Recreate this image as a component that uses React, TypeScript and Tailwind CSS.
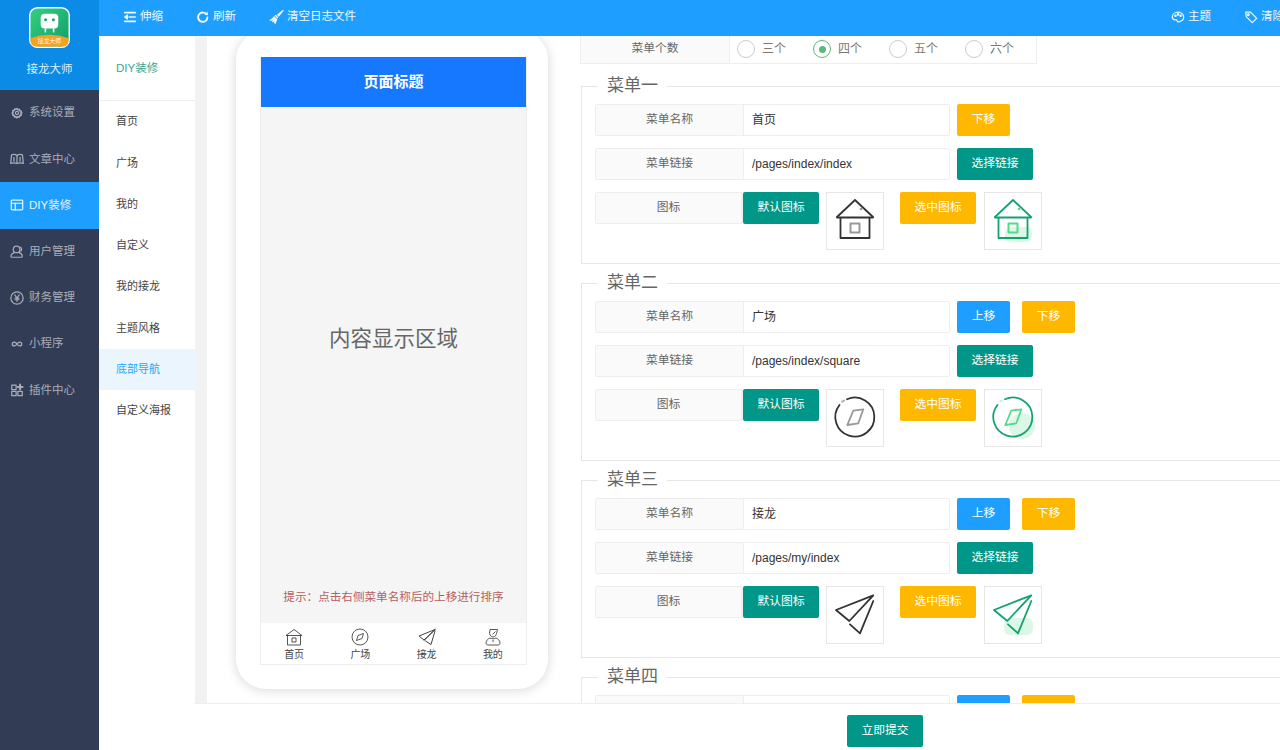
import React from "react";

const FONT = '"Liberation Sans","Noto Sans CJK SC",sans-serif';

function Logo() {
  return (
    <svg width="41" height="41" viewBox="0 0 42 42">
      <defs>
        <linearGradient id="lg" x1="0" y1="0" x2="1" y2="1">
          <stop offset="0" stopColor="#35d07f" />
          <stop offset="1" stopColor="#0f9d6b" />
        </linearGradient>
      </defs>
      <rect x="0.75" y="0.75" width="40.5" height="40.5" rx="8" fill="url(#lg)" stroke="#fff" strokeWidth="1.5" />
      <path d="M1.5 32 Q21 25 40.5 32 V34 Q40.5 40.5 34 40.5 H8 Q1.5 40.5 1.5 34 Z" fill="#f7a11f" />
      <rect x="12" y="7" width="18" height="15" rx="4" fill="#fff" />
      <rect x="16" y="22" width="1.6" height="4" fill="#fff" />
      <rect x="24.4" y="22" width="1.6" height="4" fill="#fff" />
      <circle cx="17" cy="13" r="1.6" fill="#1aa873" />
      <circle cx="25" cy="13" r="1.6" fill="#1aa873" />
      <text x="21" y="37" textAnchor="middle" fontSize="6" fill="#fff" fontFamily={FONT}>接龙大师</text>
    </svg>
  );
}

const I = ({ children, size = 14 }: { children: React.ReactNode; size?: number }) => (
  <svg width={size} height={size} viewBox="0 0 16 16" fill="none" stroke="currentColor" strokeWidth="1.4" strokeLinecap="round" strokeLinejoin="round" className="shrink-0">
    {children}
  </svg>
);

const navIcons: Record<string, React.ReactNode> = {
  gear: (
    <>
      <circle cx="8" cy="8" r="1.8" />
      <path d="M8 3l1.100 1.200 1.600-.3.5 1.600 1.600.5-.3 1.600L13.500 8l-1 .9.3 1.600-1.600.5-.5 1.600-1.600-.3L8 13.500l-1.100-1.200-1.600.3-.5-1.600-1.600-.5.3-1.600L2.500 8l1-.9-.3-1.600 1.600-.5.5-1.600 1.600.3z" strokeWidth="1.800" />
    </>
  ),
  book: (
    <>
      <path d="M8 4C6.500 2.900 3.500 2.700 1.800 3.300L.8 13c2.200-.8 5.200-.7 7.200.2 2-.9 5-1 7.200-.2l-1-9.700C12.500 2.700 9.500 2.900 8 4z" />
      <path d="M8 4v9M4.500 6v4.500M11.500 6v4.500" />
    </>
  ),
  layout: (
    <>
      <rect x="1.500" y="2.500" width="13" height="11" rx="1" />
      <path d="M1.500 6h13M6 6v7.500" />
    </>
  ),
  user: (
    <>
      <circle cx="7.500" cy="5" r="3.800" />
      <path d="M5 8.500c-1.800.8-4 2.500-4 4.500 0 .7.500 1 1 1h11c.6 0 1-.4 1-1 0-2-2-3.700-4-4.500" />
      <path d="M12 2.500c1 1 1.500 3 .5 4.500" />
    </>
  ),
  yen: (
    <>
      <circle cx="8" cy="8" r="7" />
      <path d="M5.500 4.500L8 8l2.500-3.500M8 8v3.800M5.800 8.200h4.400M5.800 10h4.400" />
    </>
  ),
  loop: (
    <path d="M8 8c-1-1.600-2-2.200-3.200-2.200a2.200 2.200 0 000 4.400C6 10.200 7 9.600 8 8zm0 0c1 1.600 2 2.200 3.200 2.200a2.200 2.200 0 000-4.400C10 5.800 9 6.400 8 8z" strokeWidth="1.500" />
  ),
  plugin: (
    <>
      <rect x="2" y="2.500" width="5" height="5" />
      <rect x="2" y="9.500" width="5" height="5" />
      <rect x="9" y="9.500" width="5" height="5" />
      <path d="M11.500 1.800v5.500M8.800 4.500h5.500" strokeWidth="2.200" />
    </>
  ),
};

const navs = [
  ["gear", "系统设置"],
  ["book", "文章中心"],
  ["layout", "DIY装修"],
  ["user", "用户管理"],
  ["yen", "财务管理"],
  ["loop", "小程序"],
  ["plugin", "插件中心"],
];

const subs = ["首页", "广场", "我的", "自定义", "我的接龙", "主题风格", "底部导航", "自定义海报"];

function Sidebar() {
  return (
    <aside className="w-[99px] shrink-0 bg-[#323c55] flex flex-col">
      <div className="h-[90px] bg-[#0c8be6] flex flex-col items-center pt-[7px]">
        <Logo />
        <div className="mt-[13px] text-[11.5px] leading-[16px] text-[#dcefff]">接龙大师</div>
      </div>
      {navs.map(([ic, label]) => (
        <div
          key={label}
          className={
            "h-[46.2px] flex items-center gap-[5px] pl-[10px] text-[11.5px] " +
            (label === "DIY装修" ? "bg-[#1e9fff] text-[#e8f5ff]" : "text-[#a8adb9]")
          }
        >
          <I size={14}>{navIcons[ic]}</I>
          <span>{label}</span>
        </div>
      ))}
    </aside>
  );
}

function TopBar() {
  const Item = ({ icon, label, cls }: { icon: React.ReactNode; label: string; cls: string }) => (
    <div className={"flex items-center gap-[3px] whitespace-nowrap text-[11.5px] text-[#f0f8ff] " + cls}>
      {icon}
      <span>{label}</span>
    </div>
  );
  return (
    <header className="h-[36px] shrink-0 bg-[#1e9fff] flex items-center pb-[2px]">
      <Item
        cls="ml-[24px]"
        label="伸缩"
        icon={
          <I>
            <path d="M2 3h12M7 8h7M2 13h12" strokeWidth="1.800" />
            <path d="M2 8l3-2.200v4.400z" fill="currentColor" />
          </I>
        }
      />
      <Item
        cls="ml-[33px]"
        label="刷新"
        icon={
          <I>
            <path d="M13 8.500A5.300 5.300 0 118.500 3c1.800 0 3 .8 4 2" strokeWidth="2.200" />
            <path d="M13.500 1.800v3.800H9.700z" fill="currentColor" stroke="none" />
          </I>
        }
      />
      <Item
        cls="ml-[32px]"
        label="清空日志文件"
        icon={
          <svg width="16" height="16" viewBox="0 0 16 16" fill="currentColor" className="shrink-0">
            <path d="M15 .800l.8.8-5 6.200-2-2z" />
            <path d="M7.800 5.800l2.600 2.600-.8 1.200L6.500 6.500z" />
            <path d="M6 7l3.300 3.300-1.800 4.700-1.500-1 .3-2-1.300 1.500-1-.8.700-1.800-1.500 1L1 11.200C3 10.500 4.800 9 6 7z" />
          </svg>
        }
      />
      <div className="flex-1" />
      <Item
        cls=""
        label="主题"
        icon={
          <I>
            <path d="M8 2.500C4.200 2.500 1.500 5 1.500 8c0 2.500 1.800 3.500 3.200 3.200 1.500-.3 2 .3 2.300 1.200.3 1 1.200 1.400 2.300 1.100 2.800-.7 5.200-2.800 5.200-5.500C14.500 5 11.800 2.500 8 2.500z" />
            <circle cx="5" cy="6.500" r=".8" fill="currentColor" />
            <circle cx="8" cy="5" r=".8" fill="currentColor" />
            <circle cx="11" cy="6.500" r=".8" fill="currentColor" />
          </I>
        }
      />
      <Item
        cls="ml-[33px] mr-[-27px]"
        label="清除缓存"
        icon={
          <I>
            <path d="M2 2.500h5.500l7 7-5 5-7-7z" />
            <circle cx="5" cy="5.500" r="1" />
          </I>
        }
      />
    </header>
  );
}

function SubNav() {
  return (
    <nav className="w-[96px] shrink-0 bg-white flex flex-col text-[11px] text-[#444]">
      <div className="h-[65px] pl-[17px] pt-[2px] flex items-center border-b border-[#eeeeee] text-[11.5px] text-[#3aa693]">DIY装修</div>
      <div className="flex flex-col">
        {subs.map((s) => (
          <div
            key={s}
            className={"h-[41.25px] flex items-center pl-[17px] " + (s === "底部导航" ? "bg-[#ebf5fe] text-[#26a5fb]" : "")}
          >
            {s}
          </div>
        ))}
      </div>
    </nav>
  );
}

const TabHome = () => (
  <svg width="18" height="18" viewBox="0 0 18 18" fill="none" stroke="#444" strokeWidth="0.9" strokeLinejoin="round">
    <path d="M1 7.500L9 1.500l8 6M2.500 7v10h13V7M1 7.500h16" />
    <rect x="7" y="10" width="4" height="4" />
  </svg>
);
const TabCompass = () => (
  <svg width="18" height="18" viewBox="0 0 18 18" fill="none" stroke="#444" strokeWidth="0.9" strokeLinejoin="round">
    <circle cx="9" cy="9" r="8" />
    <path d="M12.500 5.500L11 10.500 5.500 12.500 7 7.500z" />
  </svg>
);
const TabPlane = () => (
  <svg width="18" height="18" viewBox="0 0 18 18" fill="none" stroke="#444" strokeWidth="1" strokeLinejoin="round" strokeLinecap="round">
    <path d="M17 1.500L1 8l5 4zM17 1.500L6 12M17 3l-4 13.500-5.500-3.500" />
  </svg>
);
const TabUser = () => (
  <svg width="18" height="18" viewBox="0 0 18 18" fill="none" stroke="#444" strokeWidth="0.9" strokeLinejoin="round">
    <path d="M6 1.500h7.500l-1 4c-.3 2-1.800 3.500-3.500 3.500S6 7.500 5.500 5.500z" />
    <path d="M6 10c-2 .8-4 2.500-4 5 0 1.200 1 2 2 2h10c1.200 0 2-.8 2-2 0-2.500-2-4.200-4-5-1.800 1-4.200 1-6 0z" />
    <path d="M8 13h2M8.500 6.500l3-3" />
  </svg>
);

function Phone() {
  const tabs: [React.ReactNode, string][] = [
    [<TabHome />, "首页"],
    [<TabCompass />, "广场"],
    [<TabPlane />, "接龙"],
    [<TabUser />, "我的"],
  ];
  return (
    <div className="w-[312px] h-[659px] shrink-0 rounded-[30px] bg-white shadow-[0_1px_12px_rgba(0,0,0,0.16)] pt-[27px] pl-[24px] flex flex-col">
      <div className="w-[267px] h-[608px] flex flex-col border-x border-b border-[#eeeeee]">
        <div className="h-[50px] shrink-0 bg-[#1677ff] flex items-center justify-center text-[15px] font-bold text-white">页面标题</div>
        <div className="flex-1 bg-[#f5f5f5] flex flex-col items-center">
          <div className="mt-[216px] text-[21.5px] leading-[32px] text-[#666]">内容显示区域</div>
          <div className="mt-[234px] text-[11.6px] leading-[16px] text-[#b5605f]">提示：点击右侧菜单名称后的上移进行排序</div>
        </div>
        <div className="h-[41px] shrink-0 bg-white grid grid-cols-4">
          {tabs.map(([ic, l]) => (
            <div key={l} className="flex flex-col items-center pt-[5px]">
              {ic}
              <div className="text-[10px] leading-[12px] mt-[3px] text-[#444]">{l}</div>
            </div>
          ))}
        </div>
      </div>
    </div>
  );
}

function Label({ children, w = "w-[149px]" }: { children: React.ReactNode; w?: string }) {
  return (
    <div className={w + " h-full shrink-0 flex items-center justify-center bg-[#fafafa] text-[#666] text-[11.8px] border-r border-[#eeeeee]"}>
      {children}
    </div>
  );
}

function Btn({ color, w, children }: { color: string; w: string; children?: React.ReactNode }) {
  return (
    <button className={color + " " + w + " h-[32px] shrink-0 rounded-[2px] text-[11.8px] text-white flex items-center justify-center"}>
      {children}
    </button>
  );
}

const TEAL = "bg-[#009688]";
const AMBER = "bg-[#ffb800]";
const BLUE = "bg-[#1e9fff]";

function Field({ label, value, children }: { label: string; value: string; children: React.ReactNode }) {
  return (
    <div className="flex h-[32px] items-start">
      <div className="w-[355px] h-[32px] flex border border-[#eeeeee] rounded-[2px] bg-white">
        <Label w="w-[148px]">{label}</Label>
        <div className="flex-1 flex items-center pl-[8px] text-[#333]">{value}</div>
      </div>
      <div className="flex gap-[12px] ml-[7px]">{children}</div>
    </div>
  );
}

type IconKind = "home" | "compass" | "plane";

function BigIcon({ kind, active }: { kind: IconKind; active?: boolean }) {
  const main = active ? "#12a36f" : "#333";
  const soft = active ? "#4fdc8c" : "#999";
  const bubble = "#dcf7e6";
  return (
    <div className="w-[58px] h-[58px] shrink-0 border border-[#e6e6e6] bg-white flex items-center justify-center">
      <svg width="50" height="50" viewBox="0 0 50 50" fill="none" strokeLinecap="round" strokeLinejoin="round">
        {kind === "home" && (
          <>
            {active && <rect x="17" y="31" width="27" height="15" rx="6" fill={bubble} />}
            <path d="M7 21L25 4l18 17" stroke={main} strokeWidth="1.800" />
            <path d="M7 21.500h36M10.500 22v20h29V22" stroke={main} strokeWidth="1.800" />
            <rect x="20.500" y="27.500" width="9" height="9" stroke={soft} strokeWidth="2" />
            <circle cx="31" cy="13" r="1.300" fill={soft} />
          </>
        )}
        {kind === "compass" && (
          <>
            {active && <circle cx="34" cy="33" r="13" fill={bubble} />}
            <path d="M17 6.200A19.500 19.500 0 1 1 9.500 12" stroke={main} strokeWidth="1.800" />
            <path d="M12 8.800l2.200-1.300" stroke={active ? "#c9efd8" : "#aaa"} strokeWidth="1.800" />
            <path d="M23.300 17.700L33.300 16.300 28.300 30.300 17.300 32z" stroke={soft} strokeWidth="1.800" />
          </>
        )}
        {kind === "plane" && (
          <>
            {active && <rect x="16" y="28" width="29" height="17" rx="6" fill={bubble} />}
            <path d="M43.300 5.300L6 20l13.300 11z" stroke={main} strokeWidth="1.800" />
            <path d="M43.300 11L30 43.300 20 34.300" stroke={main} strokeWidth="1.800" />
          </>
        )}
      </svg>
    </div>
  );
}

function MenuBlock({
  title,
  name,
  link,
  up,
  icon,
}: {
  title: string;
  name: string;
  link: string;
  up?: boolean;
  icon: IconKind;
}) {
  return (
    <fieldset className="w-[720px] h-[188px] border border-[#e6e6e6] pl-[13px] pt-[8px] mb-[9px] box-border">
      <legend className="ml-[3px] px-[9px] text-[17px] leading-[20px] text-[#666]">{title}</legend>
      <div className="flex flex-col gap-[12px]">
        <Field label="菜单名称" value={name}>
          {up && <Btn color={BLUE} w="w-[53px]">上移</Btn>}
          <Btn color={AMBER} w="w-[53px]">下移</Btn>
        </Field>
        <Field label="菜单链接" value={link}>
          <Btn color={TEAL} w="w-[76px]">选择链接</Btn>
        </Field>
        <div className="flex items-start">
          <div className="w-[148px] h-[32px] border border-[#eeeeee] rounded-[2px] shrink-0">
            <Label w="w-full">图标</Label>
          </div>
          <Btn color={TEAL} w="w-[76px]">默认图标</Btn>
          <div className="ml-[7px]"><BigIcon kind={icon} /></div>
          <div className="ml-[16px]"><Btn color={AMBER} w="w-[76px]">选中图标</Btn></div>
          <div className="ml-[8px]"><BigIcon kind={icon} active /></div>
        </div>
      </div>
    </fieldset>
  );
}

function Radio({ label, checked }: { label: string; checked?: boolean }) {
  return (
    <div className="w-[76px] flex items-center gap-[7px] text-[#777]">
      <span className={"w-[18px] h-[18px] rounded-full border-[1.5px] flex items-center justify-center " + (checked ? "border-[#5fb878]" : "border-[#cccccc]")}>
        {checked && <span className="w-[7px] h-[7px] rounded-full bg-[#5fb878]" />}
      </span>
      <span>{label}</span>
    </div>
  );
}

function Form() {
  return (
    <div className="w-[700px] shrink-0 pt-[2px] text-[12px]">
      <div className="w-[457px] h-[29px] flex border border-t-0 border-[#eeeeee]">
        <Label w="w-[149px]">菜单个数</Label>
        <div className="flex items-center pl-[7px]">
          <Radio label="三个" />
          <Radio label="四个" checked />
          <Radio label="五个" />
          <Radio label="六个" />
        </div>
      </div>
      <div className="mt-[12px] ml-[1px]">
        <MenuBlock title="菜单一" name="首页" link="/pages/index/index" icon="home" />
        <MenuBlock title="菜单二" name="广场" link="/pages/index/square" up icon="compass" />
        <MenuBlock title="菜单三" name="接龙" link="/pages/my/index" up icon="plane" />
        <fieldset className="w-[720px] h-[188px] border border-[#e6e6e6] pl-[13px] pt-[8px] box-border">
          <legend className="ml-[3px] px-[9px] text-[17px] leading-[20px] text-[#666]">菜单四</legend>
          <Field label="" value="">
            <Btn color={BLUE} w="w-[53px]" />
            <Btn color={AMBER} w="w-[53px]" />
          </Field>
        </fieldset>
      </div>
    </div>
  );
}

export default function App() {
  return (
    <div className="w-[1280px] h-[750px] overflow-hidden flex bg-white text-[12px]" style={{ fontFamily: FONT }}>
      <Sidebar />
      <div className="flex-1 min-w-0 flex flex-col">
        <TopBar />
        <div className="flex-1 min-h-0 flex">
          <SubNav />
          <div className="flex-1 min-w-0 flex flex-col">
            <div className="flex-1 min-h-0 flex bg-[#f2f2f2] pl-[12px] overflow-hidden">
              <div className="flex-1 min-w-0 bg-white flex items-start pl-[29px] gap-[32px] h-[1000px] -mt-[3px]">
                <div className="-mt-[3px]"><Phone /></div>
                <Form />
              </div>
            </div>
            <div className="h-[47px] shrink-0 bg-white border-t border-[#eeeeee] flex items-center justify-center pl-[295px] pt-[7px] z-10">
              <Btn color={TEAL} w="w-[76px]">立即提交</Btn>
            </div>
          </div>
        </div>
      </div>
    </div>
  );
}
